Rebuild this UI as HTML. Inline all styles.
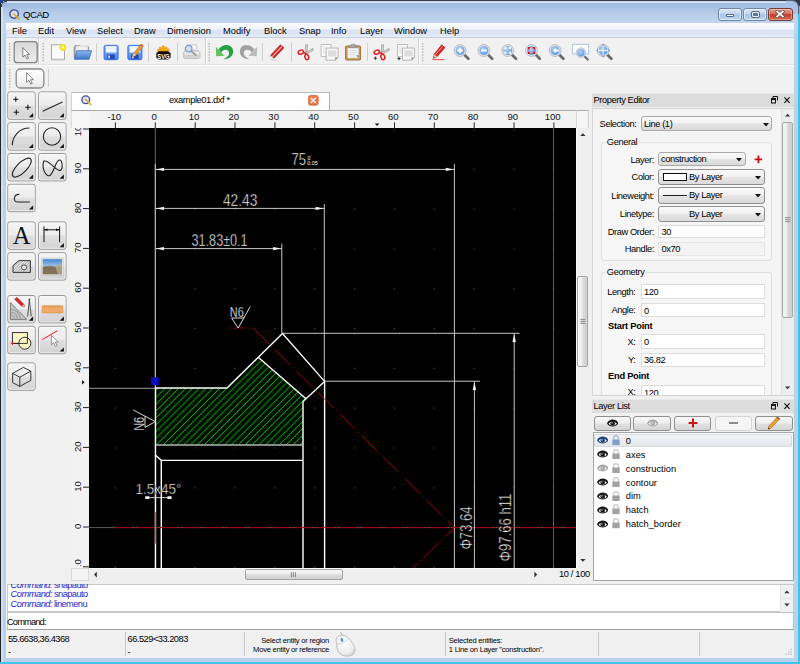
<!DOCTYPE html>
<html>
<head>
<meta charset="utf-8">
<title>QCAD</title>
<style>
*{box-sizing:border-box;margin:0;padding:0}
html,body{width:800px;height:664px;overflow:hidden}
body{position:relative;font-family:"Liberation Sans",sans-serif;font-size:9.3px;color:#000;background:#b9d1ea}
.abs{position:absolute}
#frame{position:absolute;left:0;top:0;width:800px;height:664px;background:linear-gradient(#98b7dd 0,#9dbbe0 3px,#b3cae8 12px,#c1d5ed 23px,#b9d1ea 40px,#b9d1ea 100%);overflow:hidden}
#client{position:absolute;left:6px;top:23px;width:788px;height:635px;background:#f0f0f0;overflow:hidden}
/* coordinates inside #client are offset by (6,23); use #abs layer at body level instead */
#L{position:absolute;left:0;top:0;width:800px;height:664px}
.t{position:absolute;white-space:nowrap;line-height:12px;letter-spacing:-0.4px}
.m{letter-spacing:0}
</style>
</head>
<body>
<div id="frame"></div>
<div id="client"></div>
<div id="L">

<!-- window frame edges -->
<div class="abs" style="left:0;top:0;width:800px;height:1px;background:#343e4c"></div><div class="abs" style="left:2px;top:1px;width:794px;height:1px;background:#c4d5ea"></div>
<div class="abs" style="left:0;top:0;width:1.2px;height:664px;background:#1e242c"></div>
<div class="abs" style="left:1.2px;top:2px;width:1.4px;height:660px;background:#cfdff1"></div>
<div class="abs" style="left:2px;top:2px;width:794px;height:1px;background:#dbe7f5"></div>
<div class="abs" style="left:798px;top:6px;width:2px;height:658px;background:#3fc3e6"></div>
<div class="abs" style="left:0;top:662px;width:800px;height:2px;background:#3fc3e6"></div>
<div class="abs" style="left:794px;top:0;width:6px;height:6px;background:#2a3a4a"></div>
<div class="abs" style="left:786px;top:0;width:13px;height:14px;border-top:1px solid #55657d;border-right:1px solid #55657d;border-top-right-radius:7px;background:#a7c2e3"></div>
<div class="abs" style="left:0;top:0;width:3px;height:3px;background:#1d4796"></div><div class="abs" style="left:1px;top:1px;width:6px;height:6px;border-top:1px solid #38424f;border-left:1px solid #38424f;border-top-left-radius:5px;background:#9bb9de"></div>
<!-- title icon -->
<svg class="abs" style="left:9px;top:8.6px" width="11.4" height="11.4" viewBox="0 0 13 13">
<circle cx="5.8" cy="5.8" r="4.8" fill="#e3e6ec" stroke="#3d4e96" stroke-width="1.6"/>
<path d="M3.4 5.8h3M5.8 3.4v3" stroke="#a9b0c4" stroke-width="0.9"/>
<path d="M6.6 6.6L11.6 11.6" stroke="#e9a92c" stroke-width="2" stroke-linecap="round"/>
</svg>
<div class="t" style="left:23px;top:8px;font-size:9.6px;line-height:14px;color:#000;letter-spacing:-0.5px">QCAD</div>
<!-- window buttons -->
<div class="abs" style="left:718px;top:8px;width:24px;height:13px;border:1px solid #6f86a6;border-radius:3px;background:linear-gradient(#d6e4f5 0,#c3d6ee 45%,#a9c4e6 50%,#bcd3ee 100%);box-shadow:inset 0 0 0 1px rgba(255,255,255,.55)"></div>
<div class="abs" style="left:726px;top:14px;width:8px;height:3px;background:#f4f6f9;border:1px solid #5a6a80;border-radius:1px"></div>
<div class="abs" style="left:743px;top:8px;width:24px;height:13px;border:1px solid #6f86a6;border-radius:3px;background:linear-gradient(#d6e4f5 0,#c3d6ee 45%,#a9c4e6 50%,#bcd3ee 100%);box-shadow:inset 0 0 0 1px rgba(255,255,255,.55)"></div>
<div class="abs" style="left:751.6px;top:11.6px;width:7px;height:5.4px;background:#5575a8;border:1.6px solid #f4f6f9;outline:0.8px solid #5a6a80;border-radius:1px"></div>
<div class="abs" style="left:768px;top:8px;width:25px;height:13px;border:1px solid #7a3a34;border-radius:3px;background:linear-gradient(#e29a8c 0,#d0705f 45%,#c2402c 50%,#d06a52 100%);box-shadow:inset 0 0 0 1px rgba(255,255,255,.35)"></div>
<svg class="abs" style="left:775px;top:10.4px" width="10" height="8" viewBox="0 0 10 8"><path d="M2.2 1.6L7.8 6.4M7.8 1.6L2.2 6.4" stroke="#6a3a36" stroke-width="3.2" stroke-linecap="square"/><path d="M2.2 1.6L7.8 6.4M7.8 1.6L2.2 6.4" stroke="#fff" stroke-width="1.8" stroke-linecap="square"/></svg>


<div class="abs" style="left:6px;top:23px;width:788px;height:15px;background:linear-gradient(#fbfcfe 0,#eef2fa 45%,#dbe3f3 50%,#dde5f4 80%,#e8eef8 100%);border-bottom:1px solid #c5cfe2"></div>
<div class="t" style="left:12px;top:24.8px;letter-spacing:0">File</div>
<div class="t" style="left:38px;top:24.8px;letter-spacing:0">Edit</div>
<div class="t" style="left:66px;top:24.8px;letter-spacing:0">View</div>
<div class="t" style="left:97px;top:24.8px;letter-spacing:0">Select</div>
<div class="t" style="left:134px;top:24.8px;letter-spacing:0">Draw</div>
<div class="t" style="left:167px;top:24.8px;letter-spacing:0">Dimension</div>
<div class="t" style="left:223px;top:24.8px;letter-spacing:0">Modify</div>
<div class="t" style="left:264px;top:24.8px;letter-spacing:0">Block</div>
<div class="t" style="left:299px;top:24.8px;letter-spacing:0">Snap</div>
<div class="t" style="left:331px;top:24.8px;letter-spacing:0">Info</div>
<div class="t" style="left:360px;top:24.8px;letter-spacing:0">Layer</div>
<div class="t" style="left:394px;top:24.8px;letter-spacing:0">Window</div>
<div class="t" style="left:440px;top:24.8px;letter-spacing:0">Help</div>


<!-- toolbar backgrounds -->
<div class="abs" style="left:6px;top:38px;width:788px;height:27px;background:#f1f1f1;border-bottom:1px solid #e2e2e2"></div>
<div class="abs" style="left:6px;top:65px;width:788px;height:26px;background:#f1f1f1;border-top:1px solid #fafafa"></div>
<svg class="abs" style="left:0;top:0" width="800" height="100" viewBox="0 0 800 100">
<defs>
<linearGradient id="gbtnC" x1="0" y1="0" x2="0" y2="1"><stop offset="0" stop-color="#d9d9d9"/><stop offset="1" stop-color="#ececec"/></linearGradient>
<linearGradient id="gbtnN" x1="0" y1="0" x2="0" y2="1"><stop offset="0" stop-color="#ffffff"/><stop offset="0.5" stop-color="#f6f6f6"/><stop offset="1" stop-color="#e6e6e6"/></linearGradient>
<linearGradient id="gflop" x1="0" y1="0" x2="0" y2="1"><stop offset="0" stop-color="#86b4f8"/><stop offset="1" stop-color="#4a86ee"/></linearGradient><linearGradient id="gblue" x1="0" y1="0" x2="0" y2="1"><stop offset="0" stop-color="#8db6ec"/><stop offset="1" stop-color="#3f78c8"/></linearGradient>
<radialGradient id="glens" cx="0.4" cy="0.35" r="0.7"><stop offset="0" stop-color="#b4d2f6"/><stop offset="1" stop-color="#5b96e0"/></radialGradient>
<g id="hdl" fill="#b4b4b4"><rect x="0" y="0" width="1.4" height="1.4"/><rect x="0" y="2.8" width="1.4" height="1.4"/><rect x="0" y="5.6" width="1.4" height="1.4"/><rect x="0" y="8.4" width="1.4" height="1.4"/><rect x="0" y="11.2" width="1.4" height="1.4"/><rect x="0" y="14" width="1.4" height="1.4"/><rect x="0" y="16.8" width="1.4" height="1.4"/></g>
<g id="cur"><path d="M0 0L0 9.6L2.3 7.5L4.1 11.3L5.6 10.6L3.9 6.9L6.9 6.9Z" fill="#fff" stroke="#777" stroke-width="0.9" stroke-linejoin="round"/></g>
<g id="mag"><path d="M10.8 10.8L14.8 14.8" stroke="#6c6c6c" stroke-width="2.7" stroke-linecap="round"/><circle cx="6.5" cy="6.5" r="5.9" fill="#e4e9f0" stroke="#b4bac2" stroke-width="1"/><circle cx="6.5" cy="6.5" r="4.5" fill="url(#glens)"/></g>
</defs>
<!-- handles -->
<use href="#hdl" x="9" y="43"/><use href="#hdl" x="42.5" y="43"/><use href="#hdl" x="208.5" y="43"/><use href="#hdl" x="422" y="43"/><use href="#hdl" x="9" y="69.5"/>
<!-- separators toolbars -->
<g stroke="#d0d0d0" stroke-width="1">
<path d="M38.5 38V65M205.5 38V65M418.5 38V65"/>
<path d="M96.5 43V61M148.5 43V61M177.5 43V61M262.5 43V61M291.5 43V61M367.5 43V61M48.5 69V87" stroke="#cfcfcf"/>
</g>
<g stroke="#fbfbfb" stroke-width="1"><path d="M39.5 38V65M206.5 38V65M419.5 38V65"/></g>
<!-- button 1 checked -->
<rect x="14.2" y="41.7" width="23" height="21" rx="3" fill="url(#gbtnC)" stroke="#858585" stroke-width="1.3"/>
<use href="#cur" x="22.8" y="47.6"/>
<!-- button 2 -->
<rect x="16.2" y="69" width="27.6" height="19" rx="4" fill="url(#gbtnN)" stroke="#8a8a8a" stroke-width="1.3"/>
<use href="#cur" x="26.6" y="72.8"/>

<!-- new -->
<g transform="translate(51,44.3)">
<path d="M0.5 0.5H13.5V15.5H0.5Z" fill="#fbfbfb" stroke="#a9a9a9" stroke-width="1"/>
<path d="M1.5 14.5H12.5" stroke="#d8d8d8"/>
<circle cx="11.9" cy="3.1" r="3.4" fill="#f3e11c"/><circle cx="11.9" cy="3.1" r="1.3" fill="#fffbd0"/>
</g>
<!-- open -->
<g transform="translate(73.2,44.3)">
<path d="M1 3.2L1.8 1.4H6.5L7.5 2.6H15.5V13.5H1Z" fill="#a9a9a9" stroke="#858585" stroke-width="0.8"/>
<path d="M2.6 1.6H14.8V10H2.6Z" fill="#eeeeee" stroke="#bdbdbd" stroke-width="0.6"/>
<path d="M3.6 6.4H18.4L15.8 15H1.2Z" fill="url(#gblue)" stroke="#3b6fb8" stroke-width="0.8" stroke-linejoin="round"/>
</g>
<!-- save -->
<g id="flop" transform="translate(103.6,44.9)">
<rect x="0.5" y="0.5" width="14" height="14.3" rx="1.4" fill="url(#gflop)" stroke="#3a6fe0" stroke-width="1"/>
<rect x="2.2" y="1.2" width="10.6" height="6.4" fill="#f3f7ff"/>
<path d="M2.2 3.2H12.8" stroke="#cfe0fb" stroke-width="0.8"/>
<rect x="3.8" y="9.6" width="7.4" height="4.6" fill="#2748b8"/>
<rect x="4.7" y="10.6" width="1.6" height="2.8" fill="#dfe8fb"/>
</g>
<!-- save as -->
<g transform="translate(127.4,44.9)">
<rect x="0.5" y="0.5" width="14" height="14.3" rx="1.4" fill="url(#gflop)" stroke="#3a6fe0" stroke-width="1"/>
<rect x="2.2" y="1.2" width="10.6" height="6.4" fill="#f3f7ff"/>
<rect x="3.8" y="9.6" width="7.4" height="4.6" fill="#2748b8"/>
<rect x="4.7" y="10.6" width="1.6" height="2.8" fill="#dfe8fb"/>
<path d="M5.2 11.8L6.2 8.6L13.6 -0.8L15.9 1L8.4 10.3Z" fill="#f0a030" stroke="#c86a18" stroke-width="0.7" stroke-linejoin="round"/>
<path d="M13.6 -0.8L15.9 1L15 2.1L12.8 0.3Z" fill="#e05a3a"/>
<path d="M5.2 11.8L6.2 8.6L8.4 10.3Z" fill="#f3dcae"/><path d="M5.2 11.8L5.6 10.6L6.4 11.2Z" fill="#333"/>
</g>
<!-- svg -->
<g transform="translate(155.8,45.2)">
<g fill="#f3a21a"><circle cx="2.6" cy="5" r="1.4"/><circle cx="4.6" cy="2.9" r="1.4"/><circle cx="7.5" cy="1.6" r="1.5"/><circle cx="10.4" cy="2.9" r="1.4"/><circle cx="12.4" cy="5" r="1.4"/><ellipse cx="7.5" cy="5.2" rx="4.8" ry="2.6"/></g>
<path d="M2.8 6H12.4L14.8 8V12.2L12.6 14.3H2.6L0.5 12.2V8Z" fill="#0c0c0c"/>
<text x="7.65" y="13.5" font-family="Liberation Sans" font-weight="bold" font-size="8" fill="#fff" text-anchor="middle" textLength="12.4" lengthAdjust="spacingAndGlyphs">SVG</text>
</g>
<!-- print preview -->
<g transform="translate(183,44.4)">
<path d="M4.2 0.4H13.8V7H4.2Z" fill="#f0f0f0" stroke="#c4c4c4" stroke-width="0.7"/>
<path d="M10.6 2.2H12.6V5H10.6Z" fill="#fff"/>
<path d="M2 6H15.2L17 8.4V13L15.6 14.2H1.8L0.6 13V8.4Z" fill="#e2e2e2" stroke="#b4b4b4" stroke-width="0.8"/>
<path d="M1 10.6H16.6V13.2H1Z" fill="#cfcfcf"/>
<path d="M1.6 8.4H16" stroke="#f8f8f8" stroke-width="0.9"/>
<circle cx="5.6" cy="4.3" r="3.3" fill="#cfe0f6" stroke="#6f9ddb" stroke-width="1.2"/>
<path d="M8.2 6.8L12.8 10.6" stroke="#9a9a9a" stroke-width="1.7" stroke-linecap="round"/>
</g>
<!-- undo -->
<g transform="translate(206,38) scale(0.075)">
<path d="M200 196C222 150 282 140 304 182C320 218 296 252 232 283C302 290 376 238 360 160C341 82 236 66 168 150Z" fill="#27a043"/>
<path d="M131 117L136 243L248 237L214 203L176 162Z" fill="#5fc25c"/>
</g>
<!-- redo -->
<g transform="translate(206,38) scale(0.075) translate(812.5,0) scale(-1,1)">
<path d="M200 196C222 150 282 140 304 182C320 218 296 252 232 283C302 290 376 238 360 160C341 82 236 66 168 150Z" fill="#a2a2a2"/>
<path d="M131 117L136 243L248 237L214 203L176 162Z" fill="#bcbcbc"/>
</g>
<!-- eraser -->
<g transform="translate(269.2,44.2)">
<path d="M11.2 0.6L14.8 3.6L4.6 14.2L1.2 11.2Z" fill="#d8221f" stroke="#a31412" stroke-width="0.6" stroke-linejoin="round"/>
<path d="M12.6 2.4L3.2 12.4" stroke="#f6c9c6" stroke-width="1.1"/>
<path d="M1.2 11.2L4.6 14.2L3 15.6L0.2 13Z" fill="#f3f3f3" stroke="#b5b5b5" stroke-width="0.5"/>
<path d="M1 15.8H8" stroke="#d9d9d9" stroke-width="0.8"/>
</g>
<!-- scissors -->
<g id="sci" transform="translate(297.4,43.8)">
<path d="M8.3 0.8L10.2 1L9.4 9.6L7.6 9.2Z" fill="#cfcfcf" stroke="#8e8e8e" stroke-width="0.6"/>
<path d="M15.6 4.6L16 6.4L8.4 10.6L7.4 9Z" fill="#cfcfcf" stroke="#8e8e8e" stroke-width="0.6"/>
<ellipse cx="3.4" cy="8.4" rx="2.7" ry="1.9" transform="rotate(-20 3.4 8.4)" fill="none" stroke="#d7221f" stroke-width="1.5"/>
<ellipse cx="9.4" cy="13.2" rx="1.9" ry="2.7" transform="rotate(-15 9.4 13.2)" fill="none" stroke="#d7221f" stroke-width="1.5"/>
<path d="M5.8 8.6L8.6 9.8L8.8 10.8" fill="none" stroke="#d7221f" stroke-width="1.5"/>
</g>
<!-- copy -->
<g id="cpy" transform="translate(320.6,44)">
<path d="M0.5 0.5H10.5V12.5H0.5Z" fill="#fafafa" stroke="#b0b0b0" stroke-width="0.8"/>
<path d="M2 3H5M2 5H5M2 7H5M2 9H5" stroke="#d0d0d0" stroke-width="0.7"/>
<path d="M5.5 4H17.5V13.4L14.6 16.2H5.5Z" fill="#f6f6f6" stroke="#a8a8a8" stroke-width="0.8"/>
<path d="M7.4 6.4H15.6V12.4H7.4Z" fill="#dcdcdc"/>
<path d="M14.6 16.2V13.4H17.5Z" fill="#8a8a8a"/>
</g>
<!-- paste -->
<g transform="translate(345,43.8)">
<rect x="0.6" y="2.2" width="15" height="14" rx="1" fill="#c89a5a" stroke="#96682c" stroke-width="0.9"/>
<path d="M2.6 4.2H13.6V14.2H2.6Z" fill="#f3f3f3" stroke="#c9c9c9" stroke-width="0.5"/>
<path d="M4.2 6.8H12M4.2 8.8H12M4.2 10.8H10" stroke="#d4d4d4" stroke-width="0.8"/>
<path d="M4.6 3.8V1.8H6.2V0.6H10V1.8H11.6V3.8Z" fill="#a9a9a9" stroke="#7a7a7a" stroke-width="0.6"/>
<path d="M13.6 14.2V11.4H10.8Z" fill="#8a8a8a"/>
</g>
<!-- scissors ref -->
<g transform="translate(373.4,43.8)">
<path d="M8.3 0.8L10.2 1L9.4 9.6L7.6 9.2Z" fill="#cfcfcf" stroke="#8e8e8e" stroke-width="0.6"/>
<path d="M15.6 4.6L16 6.4L8.4 10.6L7.4 9Z" fill="#cfcfcf" stroke="#8e8e8e" stroke-width="0.6"/>
<ellipse cx="3.4" cy="8.4" rx="2.7" ry="1.9" transform="rotate(-20 3.4 8.4)" fill="none" stroke="#d7221f" stroke-width="1.5"/>
<ellipse cx="9.4" cy="13.2" rx="1.9" ry="2.7" transform="rotate(-15 9.4 13.2)" fill="none" stroke="#d7221f" stroke-width="1.5"/>
<path d="M5.8 8.6L8.6 9.8L8.8 10.8" fill="none" stroke="#d7221f" stroke-width="1.5"/>
<path d="M0.4 14.4H3.6M2 12.8V16" stroke="#222" stroke-width="0.9"/>
</g>
<!-- copy ref -->
<g transform="translate(397,44)">
<path d="M0.5 0.5H10.5V12.5H0.5Z" fill="#fafafa" stroke="#b0b0b0" stroke-width="0.8"/>
<path d="M2 3H5M2 5H5M2 7H5M2 9H5" stroke="#d0d0d0" stroke-width="0.7"/>
<path d="M5.5 4H17.5V13.4L14.6 16.2H5.5Z" fill="#f6f6f6" stroke="#a8a8a8" stroke-width="0.8"/>
<path d="M7.4 6.4H15.6V12.4H7.4Z" fill="#dcdcdc"/>
<path d="M14.6 16.2V13.4H17.5Z" fill="#8a8a8a"/>
<path d="M0.4 14.6H3.6M2 13V16.2" stroke="#222" stroke-width="0.9"/>
</g>
<!-- pencil -->
<g transform="translate(432,44)">
<path d="M9.6 0.8L13 3.6L5 12.8L1.4 14.2L2.2 10.2Z" fill="#da241f" stroke="#9f1411" stroke-width="0.6" stroke-linejoin="round"/>
<path d="M10.8 2L3.6 10.6" stroke="#f2a7a3" stroke-width="0.9"/>
<path d="M2.2 10.2L5 12.8L1.4 14.2Z" fill="#f1d6a8"/><path d="M1.4 14.2L1.8 12.6L2.9 13.6Z" fill="#222"/>
<path d="M0.4 15.6H12.4" stroke="#e33" stroke-width="0.9"/>
</g>
<!-- magnifiers -->
<use href="#mag" x="453.6" y="44"/><path d="M457.3 50.5H462.9M460.1 47.7V53.3" stroke="#fff" stroke-width="2"/>
<use href="#mag" x="477.4" y="44"/><path d="M481.1 50.5H486.7" stroke="#fff" stroke-width="2"/>
<use href="#mag" x="501.2" y="44"/><path d="M505 49.6V48H506.8M508.6 48H510.4V49.6M510.4 51.4V53H508.6M506.8 53H505V51.4" fill="none" stroke="#fff" stroke-width="1.3"/>
<use href="#mag" x="525" y="44"/><path d="M528.6 49.4V47.6H530.4M532.6 47.6H534.4V49.4M534.4 51.6V53.4H532.6M530.4 53.4H528.6V51.6" fill="none" stroke="#d11" stroke-width="1.4"/>
<use href="#mag" x="548.6" y="44"/><path d="M553 50.5L555.8 48V49.6H559V51.4H555.8V53Z" fill="#fff"/>
<rect x="572.3" y="44.3" width="16.4" height="9.6" fill="#fdfdfd" stroke="#9fb9dd" stroke-width="0.8"/>
<g transform="translate(575.6,47.4) scale(0.82)"><use href="#mag"/></g>
<use href="#mag" x="596.6" y="44"/><path d="M603.1 44.4V57M596.8 50.5H609.4" stroke="#f2f6fb" stroke-width="1"/><path d="M603.1 43.4L601.6 45.4H604.6ZM603.1 57.6L601.6 55.6H604.6ZM596 50.5L598 49V52ZM610.2 50.5L608.2 49V52Z" fill="#6a9ad8"/>

</svg>

<svg class="abs" style="left:0;top:0" width="90" height="400" viewBox="0 0 90 400">
<defs><linearGradient id="gtb" x1="0" y1="0" x2="0" y2="1"><stop offset="0" stop-color="#f5f5f5"/><stop offset="0.48" stop-color="#ececec"/><stop offset="0.52" stop-color="#dedede"/><stop offset="1" stop-color="#d3d3d3"/></linearGradient>
<pattern id="ph" width="2" height="2" patternUnits="userSpaceOnUse" patternTransform="rotate(45)"><rect width="2" height="2" fill="#ededed"/><path d="M0 0V2" stroke="#333" stroke-width="0.7"/></pattern>
<linearGradient id="gsky" x1="0" y1="0" x2="0" y2="1"><stop offset="0" stop-color="#3f86d8"/><stop offset="0.45" stop-color="#9cc0e6"/><stop offset="0.55" stop-color="#8a7a64"/><stop offset="1" stop-color="#9a8468"/></linearGradient>
</defs>
<rect x="7.8" y="91.9" width="27.4" height="27.4" rx="2.2" fill="url(#gtb)" stroke="#969696" stroke-width="1"/><rect x="8.8" y="92.9" width="25.4" height="25.4" rx="1.4" fill="none" stroke="#fbfbfb" stroke-width="0.8" opacity="0.8"/><path d="M33.1 113.0V117.2H28.9Z" fill="#111"/>
<rect x="38.6" y="91.9" width="27.4" height="27.4" rx="2.2" fill="url(#gtb)" stroke="#969696" stroke-width="1"/><rect x="39.6" y="92.9" width="25.4" height="25.4" rx="1.4" fill="none" stroke="#fbfbfb" stroke-width="0.8" opacity="0.8"/><path d="M63.9 113.0V117.2H59.7Z" fill="#111"/>
<rect x="7.8" y="122.7" width="27.4" height="27.4" rx="2.2" fill="url(#gtb)" stroke="#969696" stroke-width="1"/><rect x="8.8" y="123.7" width="25.4" height="25.4" rx="1.4" fill="none" stroke="#fbfbfb" stroke-width="0.8" opacity="0.8"/><path d="M33.1 143.8V148.0H28.9Z" fill="#111"/>
<rect x="38.6" y="122.7" width="27.4" height="27.4" rx="2.2" fill="url(#gtb)" stroke="#969696" stroke-width="1"/><rect x="39.6" y="123.7" width="25.4" height="25.4" rx="1.4" fill="none" stroke="#fbfbfb" stroke-width="0.8" opacity="0.8"/><path d="M63.9 143.8V148.0H59.7Z" fill="#111"/>
<rect x="7.8" y="153.5" width="27.4" height="27.4" rx="2.2" fill="url(#gtb)" stroke="#969696" stroke-width="1"/><rect x="8.8" y="154.5" width="25.4" height="25.4" rx="1.4" fill="none" stroke="#fbfbfb" stroke-width="0.8" opacity="0.8"/><path d="M33.1 174.6V178.8H28.9Z" fill="#111"/>
<rect x="38.6" y="153.5" width="27.4" height="27.4" rx="2.2" fill="url(#gtb)" stroke="#969696" stroke-width="1"/><rect x="39.6" y="154.5" width="25.4" height="25.4" rx="1.4" fill="none" stroke="#fbfbfb" stroke-width="0.8" opacity="0.8"/><path d="M63.9 174.6V178.8H59.7Z" fill="#111"/>
<rect x="7.8" y="184.3" width="27.4" height="27.4" rx="2.2" fill="url(#gtb)" stroke="#969696" stroke-width="1"/><rect x="8.8" y="185.3" width="25.4" height="25.4" rx="1.4" fill="none" stroke="#fbfbfb" stroke-width="0.8" opacity="0.8"/><path d="M33.1 205.4V209.6H28.9Z" fill="#111"/>
<rect x="7.8" y="221.9" width="27.4" height="27.4" rx="2.2" fill="url(#gtb)" stroke="#969696" stroke-width="1"/><rect x="8.8" y="222.9" width="25.4" height="25.4" rx="1.4" fill="none" stroke="#fbfbfb" stroke-width="0.8" opacity="0.8"/>
<rect x="38.6" y="221.9" width="27.4" height="27.4" rx="2.2" fill="url(#gtb)" stroke="#969696" stroke-width="1"/><rect x="39.6" y="222.9" width="25.4" height="25.4" rx="1.4" fill="none" stroke="#fbfbfb" stroke-width="0.8" opacity="0.8"/><path d="M63.9 243.0V247.2H59.7Z" fill="#111"/>
<rect x="7.8" y="252.7" width="27.4" height="27.4" rx="2.2" fill="url(#gtb)" stroke="#969696" stroke-width="1"/><rect x="8.8" y="253.7" width="25.4" height="25.4" rx="1.4" fill="none" stroke="#fbfbfb" stroke-width="0.8" opacity="0.8"/>
<rect x="38.6" y="252.7" width="27.4" height="27.4" rx="2.2" fill="url(#gtb)" stroke="#969696" stroke-width="1"/><rect x="39.6" y="253.7" width="25.4" height="25.4" rx="1.4" fill="none" stroke="#fbfbfb" stroke-width="0.8" opacity="0.8"/>
<rect x="7.8" y="295.5" width="27.4" height="27.4" rx="2.2" fill="url(#gtb)" stroke="#969696" stroke-width="1"/><rect x="8.8" y="296.5" width="25.4" height="25.4" rx="1.4" fill="none" stroke="#fbfbfb" stroke-width="0.8" opacity="0.8"/><path d="M33.1 316.6V320.8H28.9Z" fill="#111"/>
<rect x="38.6" y="295.5" width="27.4" height="27.4" rx="2.2" fill="url(#gtb)" stroke="#969696" stroke-width="1"/><rect x="39.6" y="296.5" width="25.4" height="25.4" rx="1.4" fill="none" stroke="#fbfbfb" stroke-width="0.8" opacity="0.8"/><path d="M63.9 316.6V320.8H59.7Z" fill="#111"/>
<rect x="7.8" y="326.3" width="27.4" height="27.4" rx="2.2" fill="url(#gtb)" stroke="#969696" stroke-width="1"/><rect x="8.8" y="327.3" width="25.4" height="25.4" rx="1.4" fill="none" stroke="#fbfbfb" stroke-width="0.8" opacity="0.8"/>
<rect x="38.6" y="326.3" width="27.4" height="27.4" rx="2.2" fill="url(#gtb)" stroke="#969696" stroke-width="1"/><rect x="39.6" y="327.3" width="25.4" height="25.4" rx="1.4" fill="none" stroke="#fbfbfb" stroke-width="0.8" opacity="0.8"/><path d="M63.9 347.4V351.6H59.7Z" fill="#111"/>
<rect x="7.8" y="362.9" width="27.4" height="27.4" rx="2.2" fill="url(#gtb)" stroke="#969696" stroke-width="1"/><rect x="8.8" y="363.9" width="25.4" height="25.4" rx="1.4" fill="none" stroke="#fbfbfb" stroke-width="0.8" opacity="0.8"/>

<!-- points -->
<path d="M13.2 99.3H18.4M15.8 96.7V101.9M25.3 107.3H30.5M27.9 104.7V109.9M13.7 112.2H18.9M16.3 109.6V114.8" stroke="#111" stroke-width="1"/>
<!-- line -->
<path d="M42.6 111.3L62.5 101.9" stroke="#222" stroke-width="1.1"/>
<!-- arc -->
<path d="M12.3 145.2A17.2 17.2 0 0 1 29.4 128" fill="none" stroke="#222" stroke-width="1.1"/>
<!-- circle -->
<circle cx="52" cy="136.5" r="8.7" fill="none" stroke="#222" stroke-width="1.1"/>
<!-- ellipse -->
<ellipse cx="21.8" cy="167.6" rx="12.4" ry="5" transform="rotate(-45 21.8 167.6)" fill="none" stroke="#222" stroke-width="1.1"/>
<!-- spline -->
<path d="M43.6 161.2C41.4 170 47 178.2 50.4 175C54.6 170.8 55.6 160.6 59.4 160C62.6 159.8 63 168.6 60.6 170.2C56.6 172.4 48.8 158.6 43.6 161.2Z" fill="none" stroke="#222" stroke-width="1.1"/>
<!-- polyline -->
<path d="M19.2 194.4C13.6 194.2 12.6 201.8 17.4 202H29.8" fill="none" stroke="#222" stroke-width="1.1"/>
<!-- A -->
<text x="21.6" y="243.6" font-family="Liberation Serif" font-size="24.5" text-anchor="middle" fill="#111">A</text>
<!-- dim -->
<path d="M44 226.4V242.2M59.6 226.4V242.2M44 229.8H59.6" stroke="#111" stroke-width="1" fill="none"/>
<path d="M44 229.8L47.6 228.6V231ZM59.6 229.8L56 228.6V231Z" fill="#111"/>
<!-- hatch -->
<path d="M13 272.4V265.6L18.8 260.6H30.4V272.4Z" fill="url(#ph)" stroke="#222" stroke-width="0.9" stroke-linejoin="round"/>
<circle cx="24" cy="267.4" r="2.5" fill="#ececec" stroke="#222" stroke-width="0.8"/>
<!-- image -->
<rect x="41.6" y="258" width="21.6" height="17.6" fill="#e4e4e4" stroke="#c4c4c4" stroke-width="0.6"/>
<rect x="42.8" y="259.2" width="19.2" height="15" fill="url(#gsky)"/>
<path d="M42.8 267L50 265.4L62 269V274.2H42.8Z" fill="#7d6a52" opacity="0.7"/>
<path d="M55 266L62 264V274.2H58Z" fill="#b9a88c" opacity="0.8"/>
<!-- pencil/triangle/compass -->
<path d="M10.4 319.4V302.6L26.6 319.4Z" fill="#c4c4c4" stroke="#6a6a6a" stroke-width="0.8" stroke-linejoin="round"/>
<path d="M11.4 309.4A10 10 0 0 1 20.4 318.6M11.4 312.4A7 7 0 0 1 17.4 318.6M11.4 315.2A4 4 0 0 1 14.6 318.6" fill="none" stroke="#7a7a7a" stroke-width="0.6"/>
<path d="M14.6 299.2L17 297.4L23.8 304.2L24.4 306.8L21.8 306.2Z" fill="#d9231f" stroke="#971210" stroke-width="0.5"/>
<path d="M21.8 306.2L24.4 306.8L23.8 304.2Z" fill="#f0d6a8"/>
<path d="M29.4 299.6L27.6 316.4M29.4 299.6L31.2 316.4" stroke="#444" stroke-width="0.9" fill="none"/><circle cx="29.4" cy="299.4" r="0.9" fill="#444"/>
<!-- ruler -->
<rect x="42.2" y="305.7" width="20.6" height="7.2" rx="0.8" fill="#f0aa68" stroke="#d98f4a" stroke-width="0.6"/>
<path d="M44.4 305.9V308M46.6 305.9V307.4M48.8 305.9V308M51 305.9V307.4M53.2 305.9V308M55.4 305.9V307.4M57.6 305.9V308M59.8 305.9V307.4" stroke="#c98244" stroke-width="0.5"/>
<!-- clip -->
<rect x="12.4" y="332.6" width="15" height="10.8" fill="#fdf7c8" stroke="#222" stroke-width="0.9"/>
<circle cx="24.8" cy="343.2" r="6" fill="#fdf7c8" stroke="#222" stroke-width="0.9"/>
<path d="M12.4 343.4H27.4V337.8" fill="none" stroke="#222" stroke-width="0.9"/>
<path d="M10.8 343.4H14.2M12.4 341.8V345" stroke="#e11" stroke-width="0.9"/>
<!-- line + cursor -->
<path d="M42.2 339.6L57.6 330.6" stroke="#ee2222" stroke-width="1.1"/>
<g transform="translate(51.4,335.2)"><path d="M0 0L0 9.6L2.3 7.5L4.1 11.3L5.6 10.6L3.9 6.9L6.9 6.9Z" fill="#fff" stroke="#888" stroke-width="0.9" stroke-linejoin="round"/></g>
<!-- cube -->
<path d="M12.6 373.4L23.4 367.4L30.8 371.2V380.4L19.8 386.4L12.6 382.6Z" fill="none" stroke="#222" stroke-width="0.9" stroke-linejoin="round"/>
<path d="M12.6 373.4L19.8 377.2L30.8 371.2M19.8 377.2V386.4" fill="none" stroke="#222" stroke-width="0.9" stroke-linejoin="round"/>

</svg>
<!--CANVAS_START--><div class="abs" style="left:71px;top:91.6px;width:259.4px;height:18.4px;background:#fff;border-left:1px solid #d0d0d0;border-top:1px solid #bdbdbd;border-right:1px solid #b0b0b0"></div>
<svg class="abs" style="left:81px;top:95.4px" width="11" height="11" viewBox="0 0 13 13">
<circle cx="5.6" cy="5.6" r="4.6" fill="#e3e6ec" stroke="#3d4e96" stroke-width="1.6"/>
<path d="M3.4 5.6h3M5.6 3.4v3" stroke="#a9b0c4" stroke-width="0.9"/>
<path d="M6.4 6.4L11.4 11.4" stroke="#e9a92c" stroke-width="2" stroke-linecap="round"/></svg>
<div class="t" style="left:169px;top:94px">example01.dxf *</div>
<svg class="abs" style="left:308.4px;top:95.4px" width="10.6" height="10.6" viewBox="0 0 12 12"><rect x="0.5" y="0.5" width="11" height="11" rx="2.2" fill="#ea7a50" stroke="#dd6a42" stroke-width="1"/><path d="M3.6 3.6L8.4 8.4M8.4 3.6L3.6 8.4" stroke="#fff" stroke-width="1.6" stroke-linecap="round"/></svg>
<div class="abs" style="left:71px;top:110px;width:518px;height:18px;background:#f2f2f2;border-top:1px solid #a9a9a9"></div>
<div class="abs" style="left:71px;top:128px;width:18px;height:440px;background:#f2f2f2"></div>
<div class="abs" style="left:576px;top:110px;width:13px;height:18px;background:#f6f6f6;border-top:1px solid #a9a9a9;border-left:1px solid #d8d8d8;border-right:1px solid #d0d0d0"></div>
<svg class="abs" style="left:0;top:0" width="600" height="600" viewBox="0 0 600 600" font-family="Liberation Sans" font-size="9.6" fill="#111">
<defs><clipPath id="vr"><rect x="71" y="128" width="18" height="440"/></clipPath></defs>
<path d="M115.4 122.4V128" stroke="#222" stroke-width="1"/>
<text x="114.2" y="119.6" text-anchor="middle">-10</text>
<path d="M155.3 122.4V128" stroke="#222" stroke-width="1"/>
<text x="154.1" y="119.6" text-anchor="middle">0</text>
<path d="M195.2 122.4V128" stroke="#222" stroke-width="1"/>
<text x="194.0" y="119.6" text-anchor="middle">10</text>
<path d="M235.0 122.4V128" stroke="#222" stroke-width="1"/>
<text x="233.8" y="119.6" text-anchor="middle">20</text>
<path d="M274.9 122.4V128" stroke="#222" stroke-width="1"/>
<text x="273.7" y="119.6" text-anchor="middle">30</text>
<path d="M314.7 122.4V128" stroke="#222" stroke-width="1"/>
<text x="313.5" y="119.6" text-anchor="middle">40</text>
<path d="M354.6 122.4V128" stroke="#222" stroke-width="1"/>
<text x="353.4" y="119.6" text-anchor="middle">50</text>
<path d="M394.5 122.4V128" stroke="#222" stroke-width="1"/>
<text x="393.3" y="119.6" text-anchor="middle">60</text>
<path d="M434.3 122.4V128" stroke="#222" stroke-width="1"/>
<text x="433.1" y="119.6" text-anchor="middle">70</text>
<path d="M474.2 122.4V128" stroke="#222" stroke-width="1"/>
<text x="473.0" y="119.6" text-anchor="middle">80</text>
<path d="M514.0 122.4V128" stroke="#222" stroke-width="1"/>
<text x="512.8" y="119.6" text-anchor="middle">90</text>
<path d="M553.9 122.4V128" stroke="#222" stroke-width="1"/>
<text x="552.7" y="119.6" text-anchor="middle">100</text>
<g clip-path="url(#vr)">
<path d="M83 566.8H89" stroke="#222" stroke-width="1"/>
<text transform="translate(81 566.1) rotate(-90)" text-anchor="middle">-10</text>
<path d="M83 527.0H89" stroke="#222" stroke-width="1"/>
<text transform="translate(81 526.3) rotate(-90)" text-anchor="middle">0</text>
<path d="M83 487.2H89" stroke="#222" stroke-width="1"/>
<text transform="translate(81 486.5) rotate(-90)" text-anchor="middle">10</text>
<path d="M83 447.4H89" stroke="#222" stroke-width="1"/>
<text transform="translate(81 446.7) rotate(-90)" text-anchor="middle">20</text>
<path d="M83 407.6H89" stroke="#222" stroke-width="1"/>
<text transform="translate(81 406.9) rotate(-90)" text-anchor="middle">30</text>
<path d="M83 367.8H89" stroke="#222" stroke-width="1"/>
<text transform="translate(81 367.1) rotate(-90)" text-anchor="middle">40</text>
<path d="M83 328.0H89" stroke="#222" stroke-width="1"/>
<text transform="translate(81 327.3) rotate(-90)" text-anchor="middle">50</text>
<path d="M83 288.2H89" stroke="#222" stroke-width="1"/>
<text transform="translate(81 287.5) rotate(-90)" text-anchor="middle">60</text>
<path d="M83 248.4H89" stroke="#222" stroke-width="1"/>
<text transform="translate(81 247.7) rotate(-90)" text-anchor="middle">70</text>
<path d="M83 208.6H89" stroke="#222" stroke-width="1"/>
<text transform="translate(81 207.9) rotate(-90)" text-anchor="middle">80</text>
<path d="M83 168.8H89" stroke="#222" stroke-width="1"/>
<text transform="translate(81 168.1) rotate(-90)" text-anchor="middle">90</text>
<path d="M83 129.0H89" stroke="#222" stroke-width="1"/>
<text transform="translate(81 128.3) rotate(-90)" text-anchor="middle">100</text>
</g>
<path d="M374.8 123.4H379.4L377.1 126Z" fill="#111"/>
<path d="M82 380V384.4L84.6 382.2Z" fill="#111"/>
</svg>
<div class="abs" style="left:71px;top:110px;width:18px;height:18px;background:#f5f5f5;border-top:1px solid #a9a9a9;border-left:1px solid #dcdcdc"></div>
<div class="abs" style="left:71px;top:565.8px;width:11.6px;height:3px;background:#f2f2f2"></div>
<div class="abs" style="left:71px;top:568px;width:18px;height:13px;background:#f4f4f4;border:1px solid #dadada"></div>
<svg class="abs" style="left:89px;top:128px;background:#000" width="487" height="440" viewBox="89 128 487 440">
<defs><clipPath id="hc"><path d="M155.6 388H227L258.8 357.8L306 398.7L303 401.6V444.7H155.6Z"/></clipPath></defs>
<path d="M114.8 567.4h1.2M114.8 527.6h1.2M114.8 487.8h1.2M114.8 448.0h1.2M114.8 408.2h1.2M114.8 368.4h1.2M114.8 328.6h1.2M114.8 288.8h1.2M114.8 249.0h1.2M114.8 209.2h1.2M114.8 169.4h1.2M114.8 129.6h1.2M154.7 567.4h1.2M154.7 527.6h1.2M154.7 487.8h1.2M154.7 448.0h1.2M154.7 408.2h1.2M154.7 368.4h1.2M154.7 328.6h1.2M154.7 288.8h1.2M154.7 249.0h1.2M154.7 209.2h1.2M154.7 169.4h1.2M154.7 129.6h1.2M194.6 567.4h1.2M194.6 527.6h1.2M194.6 487.8h1.2M194.6 448.0h1.2M194.6 408.2h1.2M194.6 368.4h1.2M194.6 328.6h1.2M194.6 288.8h1.2M194.6 249.0h1.2M194.6 209.2h1.2M194.6 169.4h1.2M194.6 129.6h1.2M234.4 567.4h1.2M234.4 527.6h1.2M234.4 487.8h1.2M234.4 448.0h1.2M234.4 408.2h1.2M234.4 368.4h1.2M234.4 328.6h1.2M234.4 288.8h1.2M234.4 249.0h1.2M234.4 209.2h1.2M234.4 169.4h1.2M234.4 129.6h1.2M274.3 567.4h1.2M274.3 527.6h1.2M274.3 487.8h1.2M274.3 448.0h1.2M274.3 408.2h1.2M274.3 368.4h1.2M274.3 328.6h1.2M274.3 288.8h1.2M274.3 249.0h1.2M274.3 209.2h1.2M274.3 169.4h1.2M274.3 129.6h1.2M314.1 567.4h1.2M314.1 527.6h1.2M314.1 487.8h1.2M314.1 448.0h1.2M314.1 408.2h1.2M314.1 368.4h1.2M314.1 328.6h1.2M314.1 288.8h1.2M314.1 249.0h1.2M314.1 209.2h1.2M314.1 169.4h1.2M314.1 129.6h1.2M354.0 567.4h1.2M354.0 527.6h1.2M354.0 487.8h1.2M354.0 448.0h1.2M354.0 408.2h1.2M354.0 368.4h1.2M354.0 328.6h1.2M354.0 288.8h1.2M354.0 249.0h1.2M354.0 209.2h1.2M354.0 169.4h1.2M354.0 129.6h1.2M393.9 567.4h1.2M393.9 527.6h1.2M393.9 487.8h1.2M393.9 448.0h1.2M393.9 408.2h1.2M393.9 368.4h1.2M393.9 328.6h1.2M393.9 288.8h1.2M393.9 249.0h1.2M393.9 209.2h1.2M393.9 169.4h1.2M393.9 129.6h1.2M433.7 567.4h1.2M433.7 527.6h1.2M433.7 487.8h1.2M433.7 448.0h1.2M433.7 408.2h1.2M433.7 368.4h1.2M433.7 328.6h1.2M433.7 288.8h1.2M433.7 249.0h1.2M433.7 209.2h1.2M433.7 169.4h1.2M433.7 129.6h1.2M473.6 567.4h1.2M473.6 527.6h1.2M473.6 487.8h1.2M473.6 448.0h1.2M473.6 408.2h1.2M473.6 368.4h1.2M473.6 328.6h1.2M473.6 288.8h1.2M473.6 249.0h1.2M473.6 209.2h1.2M473.6 169.4h1.2M473.6 129.6h1.2M513.4 567.4h1.2M513.4 527.6h1.2M513.4 487.8h1.2M513.4 448.0h1.2M513.4 408.2h1.2M513.4 368.4h1.2M513.4 328.6h1.2M513.4 288.8h1.2M513.4 249.0h1.2M513.4 209.2h1.2M513.4 169.4h1.2M513.4 129.6h1.2M553.3 567.4h1.2M553.3 527.6h1.2M553.3 487.8h1.2M553.3 448.0h1.2M553.3 408.2h1.2M553.3 368.4h1.2M553.3 328.6h1.2M553.3 288.8h1.2M553.3 249.0h1.2M553.3 209.2h1.2M553.3 169.4h1.2M553.3 129.6h1.2" stroke="#4a4a4a" stroke-width="1.2"/>
<path d="M89 527.6H576" stroke="#5a5a5a" stroke-width="1"/>
<path d="M553.5 128V568" stroke="#5e5e5e" stroke-width="1"/>
<path d="M155.3 128V568" stroke="#6a6a6a" stroke-width="1"/>
<!-- hatch -->
<g clip-path="url(#hc)"><rect x="150" y="350" width="160" height="100" fill="#001000"/><path d="M19.60 445l100 -100M26.43 445l100 -100M33.26 445l100 -100M40.09 445l100 -100M46.92 445l100 -100M53.75 445l100 -100M60.58 445l100 -100M67.41 445l100 -100M74.24 445l100 -100M81.07 445l100 -100M87.90 445l100 -100M94.73 445l100 -100M101.56 445l100 -100M108.39 445l100 -100M115.22 445l100 -100M122.05 445l100 -100M128.88 445l100 -100M135.71 445l100 -100M142.54 445l100 -100M149.37 445l100 -100M156.20 445l100 -100M163.03 445l100 -100M169.86 445l100 -100M176.69 445l100 -100M183.52 445l100 -100M190.35 445l100 -100M197.18 445l100 -100M204.01 445l100 -100M210.84 445l100 -100M217.67 445l100 -100M224.50 445l100 -100M231.33 445l100 -100M238.16 445l100 -100M244.99 445l100 -100M251.82 445l100 -100M258.65 445l100 -100M265.48 445l100 -100M272.31 445l100 -100M279.14 445l100 -100M285.97 445l100 -100M292.80 445l100 -100M299.63 445l100 -100M306.46 445l100 -100" stroke="#00c600" stroke-width="0.95" fill="none"/></g>
<!-- thin dimension/extension lines -->
<g stroke="#c6c6c6" stroke-width="1" fill="none">
<path d="M155.3 164V388"/>
<path d="M454.4 164V568"/>
<path d="M324.3 204V381"/>
<path d="M281.8 243.5V333"/>
<path d="M155.3 169.4H454.4M155.3 208.4H324.3M155.3 248.6H281.8"/>
<path d="M282.5 333.3H519.5M324.6 381.2H480"/>
<path d="M474.4 381.2V568M514.2 333.3V568"/>
<path d="M89 388.3H155.6" stroke="#9a9a9a"/>
<path d="M145.7 497.6H171"/>
</g>
<!-- arrowheads -->
<g fill="#f2f2f2">
<path d="M155.8 169.4L164 167.7V171.1ZM453.9 169.4L445.7 167.7V171.1Z"/>
<path d="M155.8 208.4L164 206.7V210.1ZM323.8 208.4L315.6 206.7V210.1Z"/>
<path d="M155.8 248.6L164 246.9V250.3ZM281.3 248.6L273.1 246.9V250.3Z"/>
<path d="M474.4 381.8L472.7 390H476.1ZM514.2 333.8L512.5 342H515.9Z"/>
<path d="M145.2 496.2H149.4V499H145.2ZM167.4 496.2H171.6V499H167.4Z"/>
</g>
<!-- contour -->
<g stroke="#ffffff" stroke-width="1.4" fill="none" stroke-linejoin="miter">
<path d="M155.5 568V388H227L282.5 333.5L324.6 381.4V568"/>
<path d="M258.8 357.8L306 398.7"/>
<path d="M324.6 381.4L303 401.6V568"/>
<path d="M155.5 455.3L161.3 460.4H303"/>
<path d="M161.3 460.4V568"/>
</g>
<path d="M155.6 445H303" stroke="#b4b4b4" stroke-width="1.3"/>
<!-- red axes -->
<g stroke="#aa0000" stroke-width="1" fill="none">
<path d="M115 527.6H576" stroke-dasharray="17 2 1.5 2"/>
<path d="M253 328L454.4 527.6L413 568" stroke-dasharray="22 3.5 1.5 3.5"/>
<path d="M227 328H253" stroke-dasharray="1.5 2.5 1.5 2.5 8 2.5"/>
<path d="M155.3 512V543.5" stroke="#e03030"/>
</g>
<!-- texts -->
<g font-family="Liberation Sans" fill="#ffffff" stroke="#000" stroke-width="0.42">
<text x="291.4" y="165.4" font-size="15.6" textLength="14.6" lengthAdjust="spacingAndGlyphs">75</text>
<text x="307.4" y="160" font-size="5.5" textLength="3" lengthAdjust="spacingAndGlyphs" fill="#fff" stroke="none">0</text>
<text x="307.2" y="165.4" font-size="5.5" textLength="10.6" lengthAdjust="spacingAndGlyphs" fill="#fff" stroke="none">0.05</text>
<text x="222.9" y="205.8" font-size="15.6" textLength="34.5" lengthAdjust="spacingAndGlyphs">42.43</text>
<text x="191.6" y="245.6" font-size="15.6" textLength="56" lengthAdjust="spacingAndGlyphs">31.83±0.1</text>
<text x="135.4" y="494.2" font-size="14.8" textLength="46" lengthAdjust="spacingAndGlyphs" fill="#fff" stroke-width="0.4">1.5x45°</text>
<text transform="translate(471.6 549.6) rotate(-90)" font-size="15.6" textLength="43" lengthAdjust="spacingAndGlyphs">Φ73.64</text>
<text transform="translate(511 561.6) rotate(-90)" font-size="15.6" textLength="68" lengthAdjust="spacingAndGlyphs">Φ97.66 h11</text>
<text x="229.8" y="317.2" font-size="13.8" textLength="14" lengthAdjust="spacingAndGlyphs" fill="#fff" stroke-width="0.3">N6</text>
<text transform="translate(143.8 430.8) rotate(-90)" font-size="13.8" textLength="14" lengthAdjust="spacingAndGlyphs" fill="#fff" stroke-width="0.3">N6</text>
</g>
<!-- N6 symbols -->
<g stroke="#d8d8d8" stroke-width="1" fill="none">
<path d="M231.6 318H244.4M231.6 318L238.2 328L250.2 306.6"/>
<path d="M145 427.4V416.2M145 427.4L155.4 421.6L133.2 410"/>
</g>
<!-- selection ref point -->
<rect x="151.1" y="377.4" width="7.6" height="7.6" fill="#0a0ac8"/>

</svg><!--CANVAS_END-->
<!--RIGHT_START--><div class="abs" style="left:592px;top:93px;width:202px;height:14px;background:#dcdcdc;border-top:1px solid #e8e8e8"></div>
<div class="t" style="left:593.5px;top:94px;">Property Editor</div>
<svg class="abs" style="left:768px;top:93px" width="26" height="14" viewBox="0 0 26 14"><g fill="none" stroke="#111" stroke-width="1"><path d="M5 3.5H9.5V7.5"/><path d="M5 3.5V5"/><rect x="3.5" y="5.5" width="4" height="4.5"/><path d="M3.5 6.3H7.5" stroke-width="1.4"/></g><path d="M16.4 4.4L21.6 9.8M21.6 4.4L16.4 9.8" stroke="#111" stroke-width="1.15"/></svg>
<div class="abs" style="left:592px;top:108px;width:202px;height:288px;background:#f4f4f4;border:1px solid #d4d4d4;border-right:none"></div>
<div class="abs" style="left:781px;top:109px;width:13px;height:286px;background:#ededed;border-left:1px solid #e2e2e2"></div>
<div class="abs" style="left:782px;top:122px;width:11px;height:196px;border:1px solid #a6a6a6;border-radius:2px;background:linear-gradient(90deg,#f6f6f6 0,#e9e9e9 45%,#d6d6d6 55%,#cfcfcf 100%)"></div>
<svg class="abs" style="left:781px;top:109px" width="13" height="286" viewBox="0 0 13 286"><path d="M4 7.6L6.6 4.8L9.2 7.6Z" fill="#333"/><path d="M4 277.4L6.6 280.2L9.2 277.4Z" fill="#333"/><path d="M4 108.6H9.4M4 110.6H9.4M4 112.6H9.4" stroke="#7a7a7a" stroke-width="0.8"/></svg>
<div class="t" style="left:599.6px;top:118px;">Selection:</div>
<div class="abs" style="left:641px;top:116.4px;width:131.4px;height:15px;border:1px solid #a9a9a9;border-radius:3px;background:linear-gradient(#fafafa 0,#f1f1f1 48%,#e4e4e4 52%,#dadada 100%)"></div><div class="t" style="left:644px;top:117.9px;">Line (1)</div><svg class="abs" style="left:762.9px;top:122.7px" width="6" height="4" viewBox="0 0 6 4"><path d="M0 0H6L3 3.4Z" fill="#111"/></svg>
<div class="abs" style="left:600.5px;top:141.5px;width:171px;height:119.5px;border:1px solid #dedede;border-radius:3px;background:#f6f6f6"></div>
<div class="abs" style="left:605px;top:136px;width:34px;height:12px;background:#f5f5f5"></div>
<div class="t" style="left:606.8px;top:135.8px;">General</div>
<div class="t" style="right:146px;top:153.6px;">Layer:</div>
<div class="abs" style="left:658.2px;top:152px;width:87.4px;height:14.4px;border:1px solid #a9a9a9;border-radius:3px;background:linear-gradient(#fafafa 0,#f1f1f1 48%,#e4e4e4 52%,#dadada 100%)"></div><div class="t" style="left:661px;top:153.2px;">construction</div><svg class="abs" style="left:736.1px;top:158.0px" width="6" height="4" viewBox="0 0 6 4"><path d="M0 0H6L3 3.4Z" fill="#111"/></svg>
<svg class="abs" style="left:753.6px;top:154.8px" width="9" height="9" viewBox="0 0 9 9"><path d="M4.4 0.6V8.2M0.6 4.4H8.2" stroke="#cc1111" stroke-width="1.8"/></svg>
<div class="t" style="right:146px;top:171px;">Color:</div>
<div class="abs" style="left:658.2px;top:168.6px;width:106.6px;height:16.4px;border:1px solid #8f8f8f;border-radius:3px;background:linear-gradient(#fafafa 0,#f1f1f1 48%,#e4e4e4 52%,#dadada 100%)"></div><div class="t" style="left:689px;top:170.79999999999998px;">By Layer</div><svg class="abs" style="left:755.3000000000001px;top:175.6px" width="6" height="4" viewBox="0 0 6 4"><path d="M0 0H6L3 3.4Z" fill="#111"/></svg>
<div class="abs" style="left:663px;top:173px;width:23.6px;height:8px;border:1px solid #111;background:#fff"></div>
<div class="t" style="right:146px;top:189.6px;">Lineweight:</div>
<div class="abs" style="left:658.2px;top:187.2px;width:106.6px;height:16.4px;border:1px solid #8f8f8f;border-radius:3px;background:linear-gradient(#fafafa 0,#f1f1f1 48%,#e4e4e4 52%,#dadada 100%)"></div><div class="t" style="left:689px;top:189.39999999999998px;">By Layer</div><svg class="abs" style="left:755.3000000000001px;top:194.2px" width="6" height="4" viewBox="0 0 6 4"><path d="M0 0H6L3 3.4Z" fill="#111"/></svg>
<div class="abs" style="left:663px;top:195px;width:24px;height:1px;background:#222"></div>
<div class="t" style="right:146px;top:208px;">Linetype:</div>
<div class="abs" style="left:658.2px;top:205.6px;width:106.6px;height:16.4px;border:1px solid #8f8f8f;border-radius:3px;background:linear-gradient(#fafafa 0,#f1f1f1 48%,#e4e4e4 52%,#dadada 100%)"></div><div class="t" style="left:689px;top:207.79999999999998px;">By Layer</div><svg class="abs" style="left:755.3000000000001px;top:212.6px" width="6" height="4" viewBox="0 0 6 4"><path d="M0 0H6L3 3.4Z" fill="#111"/></svg>
<div class="t" style="right:146px;top:225.6px;">Draw Order:</div>
<div class="abs" style="left:658.4px;top:224.6px;width:107px;height:13.8px;border:1px solid #dcdcdc;background:#fff"></div><div class="t" style="left:661.4px;top:226.1px;">30</div>
<div class="t" style="right:146px;top:242.8px;">Handle:</div>
<div class="abs" style="left:658.4px;top:241.8px;width:107px;height:13.8px;border:1px solid #e4e4e4;background:#f3f3f3"></div><div class="t" style="left:661.4px;top:243.3px;">0x70</div>
<div class="abs" style="left:600.5px;top:271.5px;width:171px;height:130px;border:1px solid #dedede;border-radius:3px;background:#f6f6f6"></div>
<div class="abs" style="left:605px;top:266px;width:40px;height:12px;background:#f5f5f5"></div>
<div class="t" style="left:606.8px;top:265.8px;">Geometry</div>
<div class="t" style="right:164.60000000000002px;top:285.8px;">Length:</div>
<div class="abs" style="left:641px;top:284.2px;width:124.4px;height:14.6px;border:1px solid #dcdcdc;background:#fff"></div><div class="t" style="left:644px;top:286.1px;">120</div>
<div class="t" style="right:164.60000000000002px;top:304px;">Angle:</div>
<div class="abs" style="left:641px;top:302.8px;width:124.4px;height:14.6px;border:1px solid #dcdcdc;background:#fff"></div><div class="t" style="left:644px;top:304.70000000000005px;">0</div>
<div class="t" style="left:608px;top:320.4px;font-weight:bold;letter-spacing:-0.25px">Start Point</div>
<div class="t" style="right:164.60000000000002px;top:336.2px;">X:</div>
<div class="abs" style="left:641px;top:334.3px;width:124.4px;height:14.6px;border:1px solid #dcdcdc;background:#fff"></div><div class="t" style="left:644px;top:336.20000000000005px;">0</div>
<div class="t" style="right:164.60000000000002px;top:354px;">Y:</div>
<div class="abs" style="left:641px;top:352.5px;width:124.4px;height:14.6px;border:1px solid #dcdcdc;background:#fff"></div><div class="t" style="left:644px;top:354.40000000000003px;">36.82</div>
<div class="t" style="left:608px;top:370.4px;font-weight:bold;letter-spacing:-0.25px">End Point</div>
<div class="t" style="right:164.60000000000002px;top:386px;">X:</div>
<div class="abs" style="left:641px;top:384.7px;width:124.4px;height:14.6px;border:1px solid #dcdcdc;background:#fff"></div><div class="t" style="left:644px;top:386.6px;">120</div>
<div class="abs" style="left:592px;top:395px;width:190px;height:5px;background:#f0f0f0;border-top:1px solid #d4d4d4"></div>
<div class="abs" style="left:781px;top:395px;width:13px;height:5px;background:#f0f0f0;border-top:1px solid #d4d4d4"></div>
<div class="abs" style="left:592px;top:399px;width:202px;height:14px;background:#dcdcdc;border-top:1px solid #e8e8e8"></div>
<div class="t" style="left:593.5px;top:400px;">Layer List</div>
<svg class="abs" style="left:768px;top:399px" width="26" height="14" viewBox="0 0 26 14"><g fill="none" stroke="#111" stroke-width="1"><path d="M5 3.5H9.5V7.5"/><path d="M5 3.5V5"/><rect x="3.5" y="5.5" width="4" height="4.5"/><path d="M3.5 6.3H7.5" stroke-width="1.4"/></g><path d="M16.4 4.4L21.6 9.8M21.6 4.4L16.4 9.8" stroke="#111" stroke-width="1.15"/></svg>
<div class="abs" style="left:593.6px;top:415.6px;width:37px;height:15px;border:1px solid #8f8f8f;border-radius:3px;background:linear-gradient(#f7f7f7 0,#eeeeee 48%,#e0e0e0 52%,#d4d4d4 100%)"></div>
<div class="abs" style="left:633.4px;top:415.6px;width:37.6px;height:15px;border:1px solid #8f8f8f;border-radius:3px;background:linear-gradient(#f7f7f7 0,#eeeeee 48%,#e0e0e0 52%,#d4d4d4 100%)"></div>
<div class="abs" style="left:674px;top:415.6px;width:37.4px;height:15px;border:1px solid #8f8f8f;border-radius:3px;background:linear-gradient(#f7f7f7 0,#eeeeee 48%,#e0e0e0 52%,#d4d4d4 100%)"></div>
<div class="abs" style="left:714.8px;top:415.6px;width:37.2px;height:15px;border:1px solid #d2d2d2;border-radius:3px;background:#f5f5f5"></div>
<div class="abs" style="left:755.4px;top:415.6px;width:37.4px;height:15px;border:1px solid #8f8f8f;border-radius:3px;background:linear-gradient(#f7f7f7 0,#eeeeee 48%,#e0e0e0 52%,#d4d4d4 100%)"></div>
<svg class="abs" style="left:606.8px;top:418.8px;opacity:1" width="11.4" height="8.2" viewBox="0 0 11.4 8.2"><g><path d="M0 4.2C2.2 -0.6 9.2 -0.6 11.4 4.2C9.2 8.6 2.2 8.6 0 4.2Z" fill="#111"/><path d="M1.6 4.6C3.2 2 8.2 2 9.8 4.6C8.2 7.4 3.2 7.4 1.6 4.6Z" fill="#f4f4f4"/><circle cx="5.7" cy="4.5" r="2.3" fill="#111"/><circle cx="5" cy="3.9" r="0.7" fill="#f4f4f4"/></g></svg>
<svg class="abs" style="left:646.8px;top:418.8px;opacity:1" width="11.4" height="8.2" viewBox="0 0 11.4 8.2"><g><path d="M0 4.2C2.2 -0.6 9.2 -0.6 11.4 4.2C9.2 8.6 2.2 8.6 0 4.2Z" fill="#a8a8a8"/><path d="M1.6 4.6C3.2 2 8.2 2 9.8 4.6C8.2 7.4 3.2 7.4 1.6 4.6Z" fill="#f4f4f4"/><circle cx="5.7" cy="4.5" r="2.3" fill="#a8a8a8"/><circle cx="5" cy="3.9" r="0.7" fill="#f4f4f4"/></g></svg>
<svg class="abs" style="left:688px;top:417.6px" width="10" height="10" viewBox="0 0 10 10"><path d="M5 0.6V9.4M0.6 5H9.4" stroke="#cc1111" stroke-width="2"/></svg>
<div class="abs" style="left:729px;top:422.2px;width:8.6px;height:1.6px;background:#8c8c8c"></div>
<svg class="abs" style="left:766px;top:416px" width="15" height="14" viewBox="0 0 15 14"><path d="M11.4 0.8L13.8 2.8L5 12.2L2.2 13.2L2.8 10.2Z" fill="#e8a23a" stroke="#a86416" stroke-width="0.6"/><path d="M11.4 0.8L13.8 2.8L12.8 3.9L10.4 1.9Z" fill="#d94a30"/><path d="M2.2 13.2L2.5 11.6L3.6 12.6Z" fill="#222"/></svg>
<div class="abs" style="left:592.5px;top:432px;width:201px;height:148.6px;background:#fff;border:1px solid #a4a4a4"></div>
<div class="abs" style="left:594px;top:434px;width:198px;height:12.6px;background:linear-gradient(#f4f5f7,#e4e6ea);border:1px solid #d6d9de;border-radius:2px"></div>
<svg class="abs" style="left:596.6px;top:436.09999999999997px;opacity:1" width="11.4" height="8.2" viewBox="0 0 11.4 8.2"><g><path d="M0 4.2C2.2 -0.6 9.2 -0.6 11.4 4.2C9.2 8.6 2.2 8.6 0 4.2Z" fill="#1b3f7a"/><path d="M1.6 4.6C3.2 2 8.2 2 9.8 4.6C8.2 7.4 3.2 7.4 1.6 4.6Z" fill="#f4f4f4"/><circle cx="5.7" cy="4.5" r="2.3" fill="#1b3f7a"/><circle cx="5" cy="3.9" r="0.7" fill="#f4f4f4"/></g></svg>
<svg class="abs" style="left:611.6px;top:434.79999999999995px" width="8" height="10.4" viewBox="0 0 8 10.4"><path d="M1.6 4.8V3.2A2.4 2.4 0 0 1 6.4 3.2V4.8" fill="none" stroke="#a9c0e0" stroke-width="1.5"/><rect x="0.3" y="4.4" width="7.4" height="5.8" rx="0.6" fill="#7e9fcb"/></svg>
<div class="t" style="left:625.8px;top:434.59999999999997px;letter-spacing:0.02px">0</div>
<svg class="abs" style="left:596.6px;top:450.09999999999997px;opacity:1" width="11.4" height="8.2" viewBox="0 0 11.4 8.2"><g><path d="M0 4.2C2.2 -0.6 9.2 -0.6 11.4 4.2C9.2 8.6 2.2 8.6 0 4.2Z" fill="#111"/><path d="M1.6 4.6C3.2 2 8.2 2 9.8 4.6C8.2 7.4 3.2 7.4 1.6 4.6Z" fill="#f4f4f4"/><circle cx="5.7" cy="4.5" r="2.3" fill="#111"/><circle cx="5" cy="3.9" r="0.7" fill="#f4f4f4"/></g></svg>
<svg class="abs" style="left:611.6px;top:448.79999999999995px" width="8" height="10.4" viewBox="0 0 8 10.4"><path d="M1.6 4.8V3.2A2.4 2.4 0 0 1 6.4 3.2V4.8" fill="none" stroke="#cdcdcd" stroke-width="1.5"/><rect x="0.3" y="4.4" width="7.4" height="5.8" rx="0.6" fill="#a2a2a2"/></svg>
<div class="t" style="left:625.8px;top:448.59999999999997px;letter-spacing:0.02px">axes</div>
<svg class="abs" style="left:596.6px;top:464.2px;opacity:1" width="11.4" height="8.2" viewBox="0 0 11.4 8.2"><g><path d="M0 4.2C2.2 -0.6 9.2 -0.6 11.4 4.2C9.2 8.6 2.2 8.6 0 4.2Z" fill="#a4a4a4"/><path d="M1.6 4.6C3.2 2 8.2 2 9.8 4.6C8.2 7.4 3.2 7.4 1.6 4.6Z" fill="#f4f4f4"/><circle cx="5.7" cy="4.5" r="2.3" fill="#a4a4a4"/><circle cx="5" cy="3.9" r="0.7" fill="#f4f4f4"/></g></svg>
<svg class="abs" style="left:611.6px;top:462.9px" width="8" height="10.4" viewBox="0 0 8 10.4"><path d="M1.6 4.8V3.2A2.4 2.4 0 0 1 6.4 3.2V4.8" fill="none" stroke="#cdcdcd" stroke-width="1.5"/><rect x="0.3" y="4.4" width="7.4" height="5.8" rx="0.6" fill="#a2a2a2"/></svg>
<div class="t" style="left:625.8px;top:462.7px;letter-spacing:0.02px">construction</div>
<svg class="abs" style="left:596.6px;top:478.3px;opacity:1" width="11.4" height="8.2" viewBox="0 0 11.4 8.2"><g><path d="M0 4.2C2.2 -0.6 9.2 -0.6 11.4 4.2C9.2 8.6 2.2 8.6 0 4.2Z" fill="#111"/><path d="M1.6 4.6C3.2 2 8.2 2 9.8 4.6C8.2 7.4 3.2 7.4 1.6 4.6Z" fill="#f4f4f4"/><circle cx="5.7" cy="4.5" r="2.3" fill="#111"/><circle cx="5" cy="3.9" r="0.7" fill="#f4f4f4"/></g></svg>
<svg class="abs" style="left:611.6px;top:477.0px" width="8" height="10.4" viewBox="0 0 8 10.4"><path d="M1.6 4.8V3.2A2.4 2.4 0 0 1 6.4 3.2V4.8" fill="none" stroke="#cdcdcd" stroke-width="1.5"/><rect x="0.3" y="4.4" width="7.4" height="5.8" rx="0.6" fill="#a2a2a2"/></svg>
<div class="t" style="left:625.8px;top:476.8px;letter-spacing:0.02px">contour</div>
<svg class="abs" style="left:596.6px;top:491.9px;opacity:1" width="11.4" height="8.2" viewBox="0 0 11.4 8.2"><g><path d="M0 4.2C2.2 -0.6 9.2 -0.6 11.4 4.2C9.2 8.6 2.2 8.6 0 4.2Z" fill="#111"/><path d="M1.6 4.6C3.2 2 8.2 2 9.8 4.6C8.2 7.4 3.2 7.4 1.6 4.6Z" fill="#f4f4f4"/><circle cx="5.7" cy="4.5" r="2.3" fill="#111"/><circle cx="5" cy="3.9" r="0.7" fill="#f4f4f4"/></g></svg>
<svg class="abs" style="left:611.6px;top:490.59999999999997px" width="8" height="10.4" viewBox="0 0 8 10.4"><path d="M1.6 4.8V3.2A2.4 2.4 0 0 1 6.4 3.2V4.8" fill="none" stroke="#cdcdcd" stroke-width="1.5"/><rect x="0.3" y="4.4" width="7.4" height="5.8" rx="0.6" fill="#a2a2a2"/></svg>
<div class="t" style="left:625.8px;top:490.4px;letter-spacing:0.02px">dim</div>
<svg class="abs" style="left:596.6px;top:505.5px;opacity:1" width="11.4" height="8.2" viewBox="0 0 11.4 8.2"><g><path d="M0 4.2C2.2 -0.6 9.2 -0.6 11.4 4.2C9.2 8.6 2.2 8.6 0 4.2Z" fill="#111"/><path d="M1.6 4.6C3.2 2 8.2 2 9.8 4.6C8.2 7.4 3.2 7.4 1.6 4.6Z" fill="#f4f4f4"/><circle cx="5.7" cy="4.5" r="2.3" fill="#111"/><circle cx="5" cy="3.9" r="0.7" fill="#f4f4f4"/></g></svg>
<svg class="abs" style="left:611.6px;top:504.2px" width="8" height="10.4" viewBox="0 0 8 10.4"><path d="M1.6 4.8V3.2A2.4 2.4 0 0 1 6.4 3.2V4.8" fill="none" stroke="#cdcdcd" stroke-width="1.5"/><rect x="0.3" y="4.4" width="7.4" height="5.8" rx="0.6" fill="#a2a2a2"/></svg>
<div class="t" style="left:625.8px;top:504.0px;letter-spacing:0.02px">hatch</div>
<svg class="abs" style="left:596.6px;top:519.5px;opacity:1" width="11.4" height="8.2" viewBox="0 0 11.4 8.2"><g><path d="M0 4.2C2.2 -0.6 9.2 -0.6 11.4 4.2C9.2 8.6 2.2 8.6 0 4.2Z" fill="#111"/><path d="M1.6 4.6C3.2 2 8.2 2 9.8 4.6C8.2 7.4 3.2 7.4 1.6 4.6Z" fill="#f4f4f4"/><circle cx="5.7" cy="4.5" r="2.3" fill="#111"/><circle cx="5" cy="3.9" r="0.7" fill="#f4f4f4"/></g></svg>
<svg class="abs" style="left:611.6px;top:518.1999999999999px" width="8" height="10.4" viewBox="0 0 8 10.4"><path d="M1.6 4.8V3.2A2.4 2.4 0 0 1 6.4 3.2V4.8" fill="none" stroke="#cdcdcd" stroke-width="1.5"/><rect x="0.3" y="4.4" width="7.4" height="5.8" rx="0.6" fill="#a2a2a2"/></svg>
<div class="t" style="left:625.8px;top:518.0px;letter-spacing:0.02px">hatch_border</div><!--RIGHT_END-->
<!--BOTTOM_START--><div class="abs" style="left:89px;top:568px;width:453px;height:13px;background:#efefef;border-top:1px solid #f8f8f8"></div>
<div class="abs" style="left:244.5px;top:569.4px;width:98.5px;height:10.4px;border:1px solid #a4a4a4;border-radius:2px;background:linear-gradient(#f7f7f7 0,#ececec 45%,#dadada 55%,#d0d0d0 100%)"></div>
<svg class="abs" style="left:89px;top:568px" width="500" height="13" viewBox="0 0 500 13"><path d="M7.8 3.8L5 6.6L7.8 9.4Z" fill="#333"/><path d="M445.4 3.8L448.2 6.6L445.4 9.4Z" fill="#333"/><path d="M202.4 4.2V9M204.4 4.2V9M206.4 4.2V9" stroke="#6e6e6e" stroke-width="0.8"/></svg>
<div class="t" style="left:559px;top:568.4px;letter-spacing:-0.35px">10 / 100</div>
<div class="abs" style="left:576px;top:128px;width:13px;height:440px;background:#efefef;border-left:1px solid #f8f8f8"></div>
<div class="abs" style="left:577.4px;top:276px;width:10.6px;height:91px;border:1px solid #a4a4a4;border-radius:2px;background:linear-gradient(90deg,#f7f7f7 0,#ececec 45%,#dadada 55%,#d0d0d0 100%)"></div>
<svg class="abs" style="left:576px;top:128px" width="13" height="440" viewBox="0 0 13 440"><path d="M4.2 8L6.9 5.2L9.6 8Z" fill="#333"/><path d="M4.2 431L6.9 433.8L9.6 431Z" fill="#333"/><path d="M4.4 191.4H9.4M4.4 193.4H9.4M4.4 195.4H9.4" stroke="#6e6e6e" stroke-width="0.8"/></svg>
<div class="abs" style="left:6.5px;top:583.5px;width:787px;height:28.5px;background:#fff;border:1px solid #c9c9c9;overflow:hidden"></div>
<div class="abs" style="left:7px;top:584px;width:770px;height:27px;overflow:hidden">
<div class="t" style="left:3.6px;top:-4.7999999999999545px;color:#2a2acc;letter-spacing:-0.6px"><i style="letter-spacing:-0.5px;color:#1c1cd0">Command:</i> snapauto</div>
<div class="t" style="left:3.6px;top:4.399999999999977px;color:#2a2acc;letter-spacing:-0.6px"><i style="letter-spacing:-0.5px;color:#1c1cd0">Command:</i> snapauto</div>
<div class="t" style="left:3.6px;top:14px;color:#2a2acc;letter-spacing:-0.6px"><i style="letter-spacing:-0.5px;color:#1c1cd0">Command:</i> linemenu</div>
</div>
<div class="abs" style="left:780px;top:584.5px;width:13px;height:27px;background:#f1f1f1;border-left:1px solid #e6e6e6"></div>
<svg class="abs" style="left:780px;top:584.5px" width="13" height="27" viewBox="0 0 13 27"><path d="M4.2 8.2L6.9 5.4L9.6 8.2Z" fill="#333"/><path d="M4.2 18.4L6.9 21.2L9.6 18.4Z" fill="#333"/><path d="M1 13.4H13" stroke="#e4e4e4"/></svg>
<div class="abs" style="left:6.5px;top:612px;width:787px;height:17.6px;background:#fff;border:1px solid #c4c4c4;border-bottom-color:#9f9f9f"></div>
<div class="t" style="left:7px;top:615.6px;letter-spacing:-0.85px">Command:</div>
<div class="abs" style="left:6px;top:630px;width:788px;height:28px;background:#f0f0f0"></div>
<div class="abs" style="left:124.5px;top:632px;width:1px;height:24px;background:#c6c6c6"></div>
<div class="abs" style="left:243.8px;top:632px;width:1px;height:24px;background:#c6c6c6"></div>
<div class="abs" style="left:445px;top:632px;width:1px;height:24px;background:#c6c6c6"></div>
<div class="abs" style="left:597.5px;top:632px;width:1px;height:24px;background:#c6c6c6"></div>
<div class="abs" style="left:699px;top:632px;width:1px;height:24px;background:#c6c6c6"></div>
<div class="t" style="left:8px;top:632.8px;letter-spacing:-0.58px">55.6638,36.4368</div>
<div class="t" style="left:8px;top:646.4px;">-</div>
<div class="t" style="left:127.6px;top:632.8px;letter-spacing:-0.52px">66.529&lt;33.2083</div>
<div class="t" style="left:127.6px;top:646.4px;">-</div>
<div class="t" style="right:471px;top:634.8px;font-size:7.6px;letter-spacing:-0.25px">Select entity or region</div>
<div class="t" style="right:471px;top:643.6px;font-size:7.6px;letter-spacing:-0.25px">Move entity or reference</div>
<div class="t" style="left:448.8px;top:634.6px;font-size:7.6px;letter-spacing:-0.25px">Selected entities:</div>
<div class="t" style="left:448.8px;top:644.2px;font-size:7.6px;letter-spacing:-0.25px">1 Line on Layer "construction".</div>
<svg class="abs" style="left:333px;top:631px" width="26" height="27" viewBox="0 0 26 27"><defs><radialGradient id="gm" cx="0.45" cy="0.4" r="0.7"><stop offset="0" stop-color="#ffffff"/><stop offset="0.7" stop-color="#ececec"/><stop offset="1" stop-color="#c9c9c9"/></radialGradient></defs>
<path d="M7.8 1.4C8.6 2.6 8.8 3.6 9 4.6" fill="none" stroke="#8a8a8a" stroke-width="0.7"/>
<path d="M3.2 10.6C2.2 6.8 6 3.6 10.2 4.2C14.6 4.8 18.4 9.4 21.4 15.8C23.6 20.6 20.6 24.6 15.4 25C10.4 25.4 5.4 23.4 4.4 18.6Z" fill="url(#gm)" stroke="#b4b4b4" stroke-width="0.8"/>
<path d="M3.6 12.8C7.2 13.6 12.4 11.6 14.6 8.2" fill="none" stroke="#c4c4c4" stroke-width="0.7"/>
<ellipse cx="9" cy="9" rx="1.2" ry="2" transform="rotate(-20 9 9)" fill="#4f86e0"/>
</svg>
<svg class="abs" style="left:784px;top:648px" width="9" height="9" viewBox="0 0 9 9"><path d="M6.4 1.4h1.4M4 3.8h1.4M6.4 3.8h1.4M1.6 6.2h1.4M4 6.2h1.4M6.4 6.2h1.4" stroke="#bdbdbd" stroke-width="1.3"/></svg><!--BOTTOM_END-->
</div>
</body>
</html>
